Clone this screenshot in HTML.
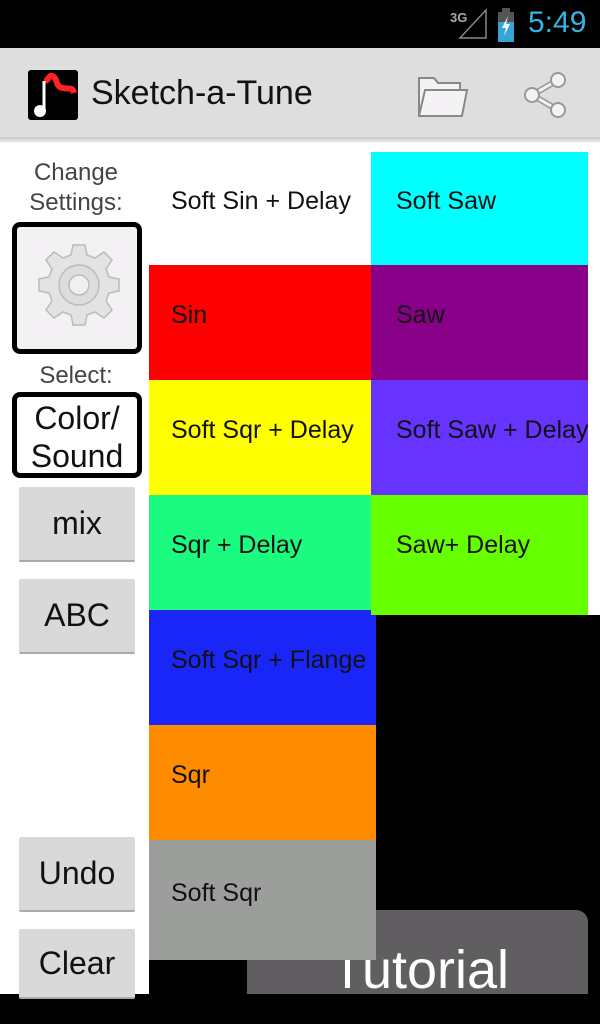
<!DOCTYPE html>
<html><head><style>
*{margin:0;padding:0;box-sizing:border-box}
body{width:600px;height:1024px;background:#000;position:relative;overflow:hidden;font-family:"Liberation Sans",sans-serif}
.a{position:absolute}
.t{position:absolute;font-size:25px;color:#111;display:flex;align-items:center;padding-left:22px;padding-bottom:14px;white-space:nowrap;overflow:hidden}
.btn{position:absolute;left:19px;width:116px;height:75px;background:#d9d9d9;border-bottom:2px solid #aaa;border-radius:2px;font-size:32px;display:flex;align-items:center;justify-content:center;color:#111}
.lbl{position:absolute;left:0;width:152px;text-align:center;font-size:24px;color:#444;line-height:30px}
</style></head><body>
<div class="a" style="left:0;top:0;width:600px;height:48px;background:#000"></div>
<div class="a" style="left:450px;top:10px;font-size:13px;color:#aaa;font-weight:bold">3G</div>
<svg class="a" style="left:458px;top:8px" width="30" height="32"><path d="M28 2 L28 30 L2 30 Z" fill="none" stroke="#888" stroke-width="1.5"/></svg>
<svg class="a" style="left:497px;top:8px" width="22" height="34"><rect x="5" y="0" width="8" height="4" fill="#555"/><rect x="1" y="4" width="16" height="30" fill="#555"/><rect x="1" y="14" width="16" height="20" fill="#33a5d7"/><path d="M11 8 L5 20 L9 20 L7 28 L13 16 L9 16 Z" fill="#fff"/></svg>
<div class="a" style="left:528px;top:6px;font-size:30px;color:#33b5e5">5:49</div>
<div class="a" style="left:0;top:48px;width:600px;height:92px;background:#dedede"></div>
<div class="a" style="left:0;top:137px;width:600px;height:6px;background:linear-gradient(#c4c4c4,#f4f4f4)"></div>
<svg class="a" style="left:28px;top:69px" width="50" height="52"><rect x="0" y="1" width="50" height="50" rx="3" fill="#000"/><path d="M16 12 C22 12 20 4 26 8 C30 12 28 16 32 18 C40 22 44 16 46 24" fill="none" stroke="#f22" stroke-width="6"/><path d="M16 44 V12" stroke="#fff" stroke-width="3"/><circle cx="12" cy="42" r="6" fill="#fff"/></svg>
<div class="a" style="left:91px;top:74px;font-size:34px;color:#111">Sketch-a-Tune</div>
<svg class="a" style="left:416px;top:72px" width="54" height="46"><path d="M3 44 V6 H18 L22 11 H44 V17" fill="#f4f2f4" stroke="#888" stroke-width="2"/><path d="M3 44 L9 18 H51 L46 44 Z" fill="#f4f2f4" stroke="#888" stroke-width="2"/></svg>
<svg class="a" style="left:518px;top:68px" width="52" height="54"><path d="M14 27 L40 12 M14 27 L40 42" stroke="#999" stroke-width="6"/><path d="M14 27 L40 12 M14 27 L40 42" stroke="#f4f2f4" stroke-width="3"/><circle cx="40" cy="12" r="7" fill="#f4f2f4" stroke="#999" stroke-width="2"/><circle cx="14" cy="27" r="7" fill="#f4f2f4" stroke="#999" stroke-width="2"/><circle cx="40" cy="42" r="7" fill="#f4f2f4" stroke="#999" stroke-width="2"/></svg>
<div class="a" style="left:0;top:143px;width:376px;height:851px;background:#fff"></div>
<div class="a" style="left:376px;top:143px;width:224px;height:472px;background:#fff"></div>
<div class="a" style="left:149px;top:960px;width:227px;height:34px;background:#000"></div>
<div class="lbl" style="top:158px">Change<br>Settings:</div>
<div class="a" style="left:12px;top:222px;width:130px;height:132px;border:5px solid #000;border-radius:8px;background:#f3f1f3"></div>
<svg class="a" style="left:34px;top:240px" width="90" height="90"><g transform="translate(45,45)" fill="#e3e3e3" stroke="#bbb" stroke-width="1.5"><path d="M-6 -40 H6 L8 -30 L16 -27 L25 -33 L33 -25 L27 -16 L30 -8 L40 -6 V6 L30 8 L27 16 L33 25 L25 33 L16 27 L8 30 L6 40 H-6 L-8 30 L-16 27 L-25 33 L-33 25 L-27 16 L-30 8 L-40 6 V-6 L-30 -8 L-27 -16 L-33 -25 L-25 -33 L-16 -27 L-8 -30 Z"/><circle r="20" fill="#ddd"/><circle r="10" fill="#f0f0f0"/></g></svg>
<div class="lbl" style="top:361px">Select:</div>
<div class="a" style="left:12px;top:392px;width:130px;height:86px;border:5px solid #000;border-radius:8px;background:#fff;font-size:32px;line-height:38px;text-align:center;color:#111;padding-top:2px">Color/<br>Sound</div>
<div class="btn" style="top:487px">mix</div>
<div class="btn" style="top:579px">ABC</div>
<div class="btn" style="top:837px">Undo</div>
<div class="btn" style="top:929px;height:70px">Clear</div>
<div class="a" style="left:247px;top:910px;width:341px;height:84px;background:#605e60;border-top-right-radius:12px;color:#fff;font-size:54px;padding-left:84px;padding-top:30px;line-height:60px">Tutorial</div>
<div class="t" style="left:149px;top:152px;width:227px;height:113px;background:#fff">Soft Sin + Delay</div>
<div class="t" style="left:149px;top:265px;width:227px;height:115px;background:#f00">Sin</div>
<div class="t" style="left:149px;top:380px;width:227px;height:115px;background:#ff0">Soft Sqr + Delay</div>
<div class="t" style="left:149px;top:495px;width:227px;height:115px;background:#1afb80">Sqr + Delay</div>
<div class="t" style="left:149px;top:610px;width:227px;height:115px;background:#1a26f8">Soft Sqr + Flange</div>
<div class="t" style="left:149px;top:725px;width:227px;height:115px;background:#ff8c00">Sqr</div>
<div class="t" style="left:149px;top:840px;width:227px;height:120px;background:#9c9e9b">Soft Sqr</div>
<div class="t" style="left:371px;top:152px;width:217px;height:113px;background:#0ff;padding-left:25px">Soft Saw</div>
<div class="t" style="left:371px;top:265px;width:217px;height:115px;background:#880088;padding-left:25px">Saw</div>
<div class="t" style="left:371px;top:380px;width:217px;height:115px;background:#6633ff;padding-left:25px">Soft Saw + Delay</div>
<div class="t" style="left:371px;top:495px;width:217px;height:120px;background:#66ff00;padding-left:25px;padding-bottom:20px">Saw+ Delay</div>
</body></html>
